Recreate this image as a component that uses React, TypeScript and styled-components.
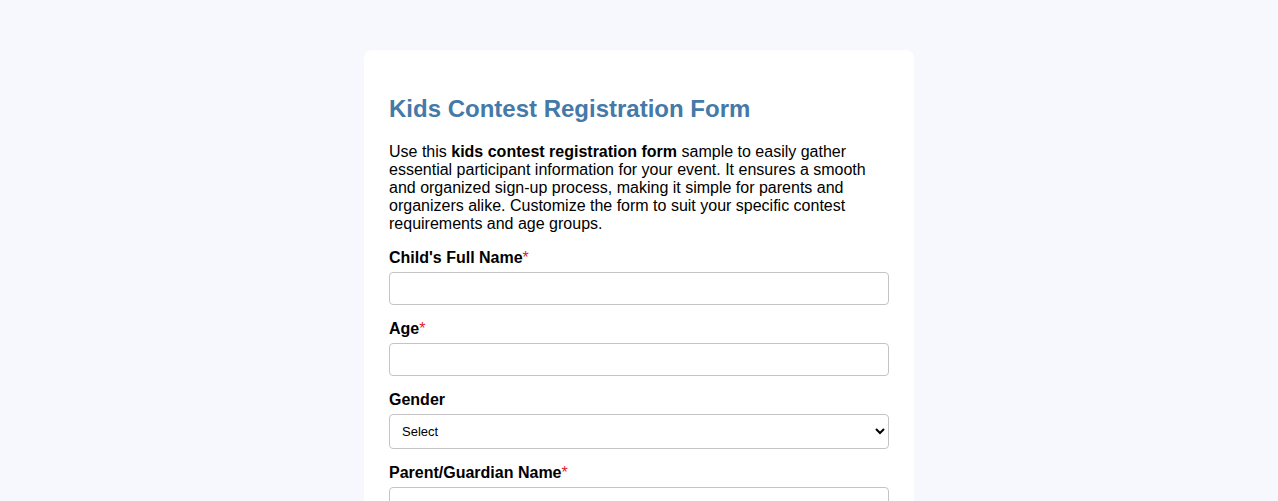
import React from "react";
import styled, { createGlobalStyle } from "styled-components";

const GlobalStyle = createGlobalStyle`
  body {
    margin: 0;
    background: #f7f8fd;
    font-family: "Liberation Sans", Arial, sans-serif;
    color: #000;
  }
`;

const Page = styled.div`
  display: flex;
  justify-content: center;
  padding: 50px 0 40px;
`;

const Card = styled.form`
  width: 500px;
  padding: 25px;
  background: #fff;
  border-radius: 8px;
`;

const Title = styled.h2`
  margin: 20px 0;
  font-size: 24px;
  font-weight: bold;
  color: #4479a8;
`;

const Intro = styled.p`
  margin: 0 0 16px;
  font-size: 16px;
`;

const Field = styled.div`
  margin-bottom: 15px;
`;

const Label = styled.label`
  display: block;
  margin-bottom: 5px;
  font-size: 16px;
  font-weight: bold;
`;

const Required = styled.span`
  color: #e0202e;
  font-weight: normal;
`;

const Input = styled.input`
  box-sizing: border-box;
  display: block;
  width: 100%;
  height: 33px;
  padding: 8px;
  font-family: inherit;
  font-size: 14px;
  border: 1px solid #c4c4c4;
  border-radius: 4px;
  background: #fff;
`;

const Select = styled.select`
  box-sizing: border-box;
  display: block;
  width: 100%;
  height: 35px;
  padding: 0 8px;
  font-family: inherit;
  font-size: 13px;
  color: #000;
  border: 1px solid #c4c4c4;
  border-radius: 4px;
  background: #fff;
`;

const fields = [
  { label: "Child's Full Name", required: true, type: "text" },
  { label: "Age", required: true, type: "number" },
  { label: "Gender", required: false, type: "select" },
  { label: "Parent/Guardian Name", required: true, type: "text" },
];

export default function App() {
  return (
    <>
      <GlobalStyle />
      <Page>
        <Card onSubmit={(e) => e.preventDefault()}>
          <Title>Kids Contest Registration Form</Title>
          <Intro>
            Use this <strong>kids contest registration form</strong> sample to
            easily gather essential participant information for your event. It
            ensures a smooth and organized sign-up process, making it simple for
            parents and organizers alike. Customize the form to suit your
            specific contest requirements and age groups.
          </Intro>
          {fields.map((f) => (
            <Field key={f.label}>
              <Label>
                {f.label}
                {f.required && <Required>*</Required>}
              </Label>
              {f.type === "select" ? (
                <Select defaultValue="">
                  <option value="">Select</option>
                  <option>Male</option>
                  <option>Female</option>
                  <option>Other</option>
                </Select>
              ) : (
                <Input type={f.type} />
              )}
            </Field>
          ))}
        </Card>
      </Page>
    </>
  );
}
